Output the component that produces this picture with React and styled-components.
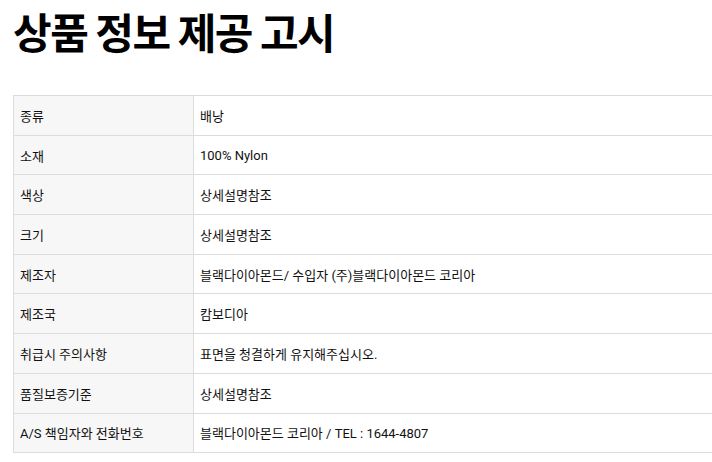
import React from "react";
import styled, { createGlobalStyle } from "styled-components";

const GlobalStyle = createGlobalStyle`
  html, body {
    margin: 0;
    padding: 0;
    background: #fff;
    overflow: hidden;
  }
  body {
    font-family: Roboto, "Noto Sans CJK KR", sans-serif;
    color: #111;
  }
`;

const Wrapper = styled.div`
  padding: 0 0 0 13px;
  width: 720px;
`;

const Title = styled.h1`
  margin: 0;
  padding-top: 5px;
  height: 90px;
  font-family: "Noto Sans CJK KR", sans-serif;
  font-size: 42px;
  font-weight: 700;
  line-height: 52px;
  letter-spacing: -1.5px;
  color: #000;
`;

const Table = styled.table`
  width: 100%;
  border-collapse: collapse;
  font-size: 13px;
`;

const Row = styled.tr`
  height: 39.7px;
`;

const Cell = styled.td`
  border: 1px solid #dcdcdc;
  padding: 0 6px;
  vertical-align: middle;
  color: #111;
  background: ${(p) => (p.$head ? "#f7f7f7" : "#fff")};
  width: ${(p) => (p.$head ? "167px" : "auto")};
`;

const rows = [
  ["종류", "배낭"],
  ["소재", "100% Nylon"],
  ["색상", "상세설명참조"],
  ["크기", "상세설명참조"],
  ["제조자", "블랙다이아몬드/ 수입자 (주)블랙다이아몬드 코리아"],
  ["제조국", "캄보디아"],
  ["취급시 주의사항", "표면을 청결하게 유지해주십시오."],
  ["품질보증기준", "상세설명참조"],
  ["A/S 책임자와 전화번호", "블랙다이아몬드 코리아 / TEL : 1644-4807"],
];

export default function App() {
  return (
    <Wrapper>
      <GlobalStyle />
      <Title>상품 정보 제공 고시</Title>
      <Table>
        <tbody>
          {rows.map(([k, v]) => (
            <Row key={k}>
              <Cell $head>{k}</Cell>
              <Cell>{v}</Cell>
            </Row>
          ))}
        </tbody>
      </Table>
    </Wrapper>
  );
}
